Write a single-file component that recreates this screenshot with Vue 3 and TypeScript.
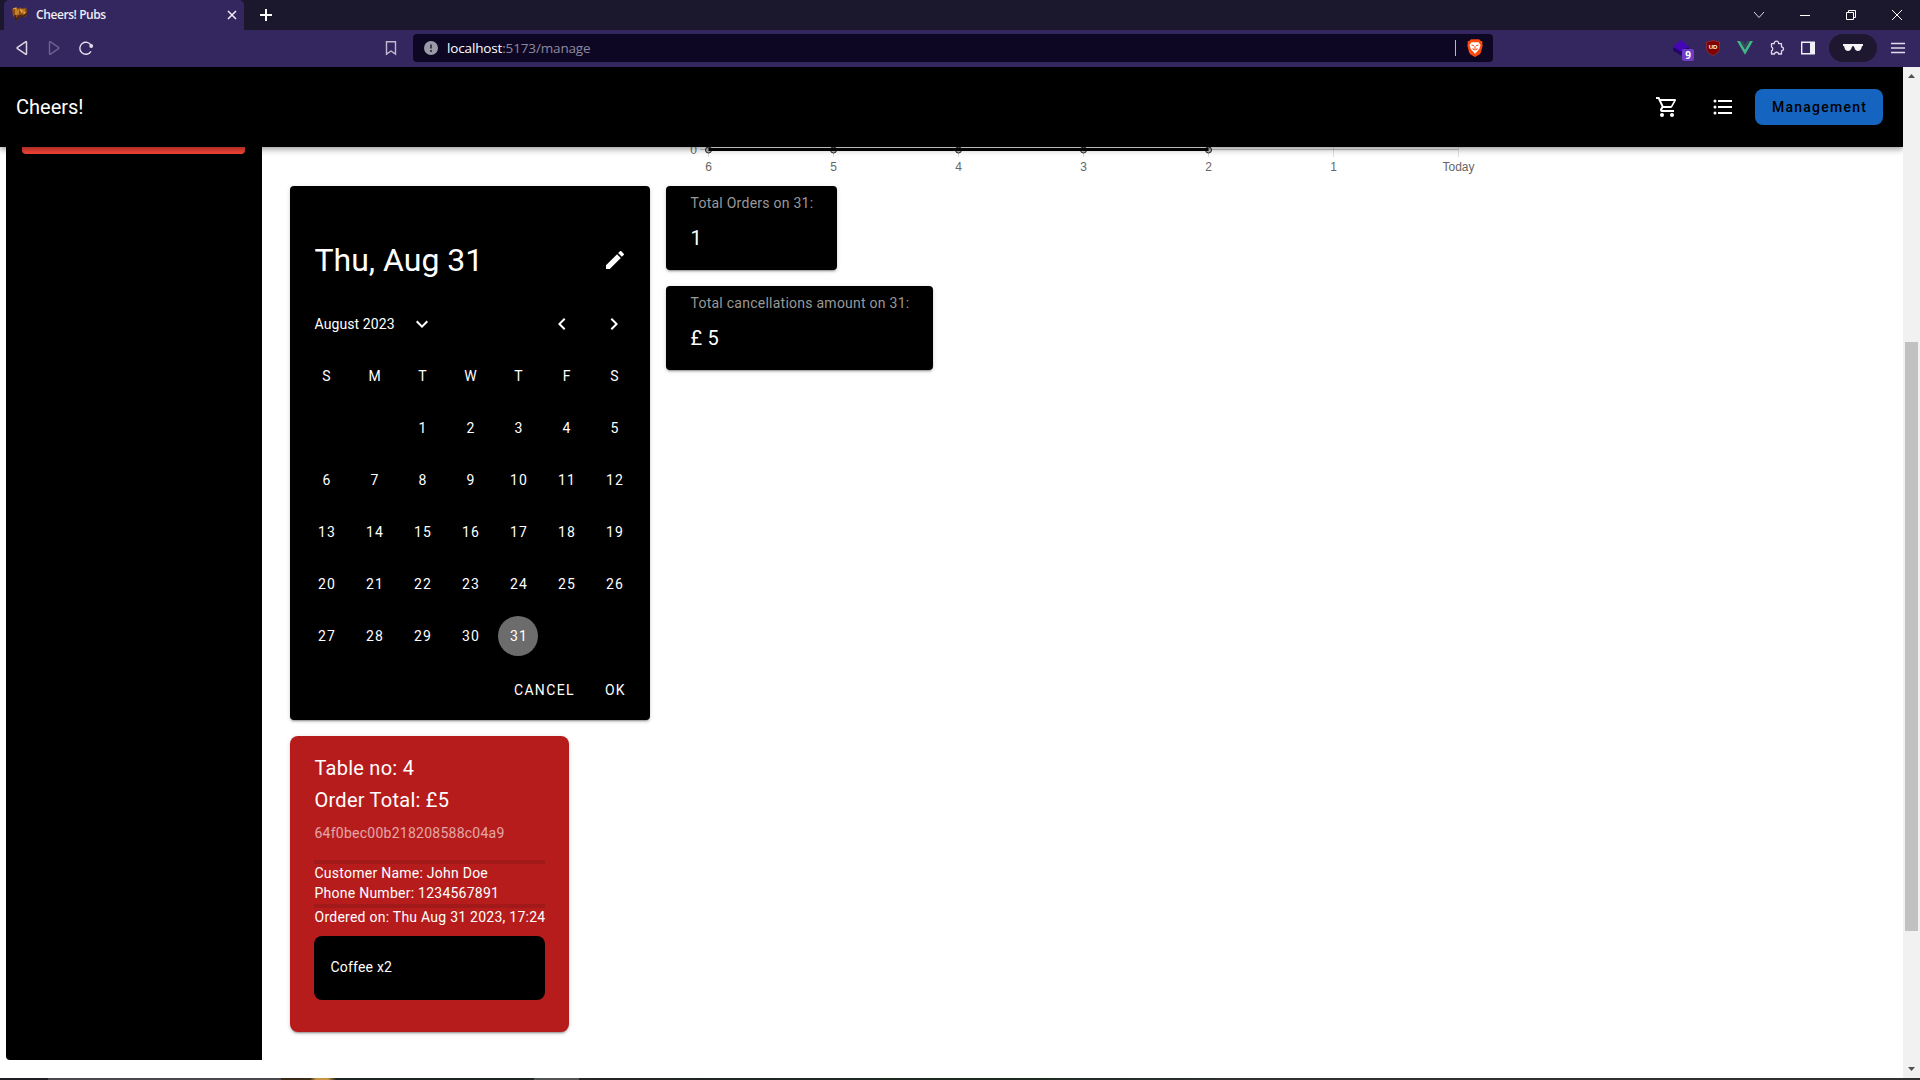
<script setup lang="ts">
interface Point { label: string; x: number; plotted: boolean }

const weekdays: string[] = ['S', 'M', 'T', 'W', 'T', 'F', 'S']
const firstWeekday = 2
const daysInMonth = 31
const selectedDay = 31
const days: (number | null)[] = [
  ...Array.from({ length: firstWeekday }, () => null),
  ...Array.from({ length: daysInMonth }, (_, i) => i + 1),
]

const labels = ['6', '5', '4', '3', '2', '1', 'Today']
const points: Point[] = labels.map((label, i) => ({ label, x: 28.5 + i * 125, plotted: i < 5 }))

const stats = [
  { title: 'Total Orders on 31:', value: '1' },
  { title: 'Total cancellations amount on 31:', value: '£ 5' },
]
</script>

<template>
  <div class="window">
    <div class="titlebar">
      <div class="tab">
        <svg class="favicon" width="18" height="18" viewBox="0 0 18 18">
          <path d="M1 3.500 4 1.500l2 1 3-1 2.500 1 3.500-1 1 3v4l-2 2.500-3-.5-3 1-3 3.500-1-4-2-1z" fill="#8a4d17" />
          <path d="M2 3l3-1v7M7 3.500v5M9 3l2 4V3M13 3.500v4l2-1" stroke="#e8a33a" stroke-width="1.200" fill="none" />
          <path d="M4 9l1 5 3-4h5l3-3" stroke="#45210c" stroke-width="1.300" fill="none" />
        </svg>
        <span class="tab-title">Cheers! Pubs</span>
        <svg class="tab-close" width="10" height="10" viewBox="0 0 10 10"><path d="M1 1l8 8M9 1L1 9" stroke="#f1eff8" stroke-width="1.500" /></svg>
      </div>
      <svg class="new-tab" width="12" height="12" viewBox="0 0 12 12"><path d="M6 0v12M0 6h12" stroke="#fff" stroke-width="2" /></svg>
      <div class="controls">
        <svg width="12" height="12" viewBox="0 0 12 12"><path d="M1 3l5 5.500L11 3" fill="none" stroke="#dcdbe0" /></svg>
        <svg width="12" height="12" viewBox="0 0 12 12"><path d="M1 6.500h10" stroke="#fff" /></svg>
        <svg width="12" height="12" viewBox="0 0 12 12"><path d="M1.500 3.500h7v7h-7zM3.500 3.500v-2h7v7h-2" fill="none" stroke="#fff" /></svg>
        <svg width="12" height="12" viewBox="0 0 12 12"><path d="M1 1l10 10M11 1L1 11" stroke="#fff" /></svg>
      </div>
    </div>

    <div class="toolbar">
      <svg class="back" width="14" height="16" viewBox="0 0 14 16"><path d="M11.500 2.200v11.600q0 1-1 .4L2.500 8.700q-.8-.7 0-1.300L10.500 1.800q1-.5 1 .4z" fill="none" stroke="#dad7e5" stroke-width="1.500" /></svg>
      <svg class="forward" width="14" height="16" viewBox="0 0 14 16"><path d="M2.500 2.200v11.600q0 1 1 .4L11.500 8.700q.8-.7 0-1.300L3.500 1.800q-1-.5-1 .4z" fill="none" stroke="#6c5f92" stroke-width="1.500" /></svg>
      <svg class="reload" width="16" height="16" viewBox="0 0 16 16"><path d="M13 11.300A6 6 0 1 1 13.200 5.600" fill="none" stroke="#e3e0ee" stroke-width="1.400" /><circle cx="13.200" cy="6" r="1.900" fill="#e3e0ee" /></svg>
      <svg class="bookmark" width="12" height="16" viewBox="0 0 12 16"><path d="M1.500 1.800h9v12.300L6 11l-4.500 3.100z" fill="none" stroke="#c0bacf" stroke-width="1.400" /></svg>
      <div class="address">
        <svg width="14" height="14" viewBox="0 0 14 14"><circle cx="7" cy="7" r="7" fill="#9a9ba7" /><path d="M7 3.500v4M7 9v2" stroke="#333249" stroke-width="1.800" /></svg>
        <span class="url"><b>localhost</b>:5173/manage</span>
        <span class="divider"></span>
        <svg class="brave" width="16" height="18" viewBox="0 0 16 18">
          <path d="M4 .3h8l1.500 1.500 2 .7-.3 2.500.5 1.500-1.900 7.200-1.300 1.800L8 18l-4.500-2.500-1.300-1.800L.3 6.500.8 5 .5 2.500l2-.7z" fill="#fb4a0c" />
          <path d="M4.500 3.300h7l2 2.700-1 3.200-1.300 2-3.200 3.500-3.200-3.500-1.300-2-1-3.200z" fill="#fff" />
          <path d="M4.500 6l2.500.8M11.500 6L9 6.800M8 7v3M5.500 9.500L7 10.800h2l1.500-1.300" stroke="#fb542b" stroke-width="1.100" fill="none" />
        </svg>
      </div>
      <div class="extensions">
        <div class="devtool">
          <svg width="18" height="18" viewBox="0 0 18 18"><path d="M1 8.500v3l8 5 8-5v-3z" fill="#25056c" /><path d="M9 1l8 6.500-8 5-8-5z" fill="#4506b5" /></svg>
          <span class="count">9</span>
        </div>
        <div class="shield">
          <svg width="14" height="16" viewBox="0 0 14 16"><path d="M7 .5L13.500 2v6q0 5-6.500 7.500Q.5 13 .5 8V2z" fill="#800000" stroke="#9e3430" stroke-width=".7" /></svg>
          <span>UD</span>
        </div>
        <svg width="16" height="14" viewBox="0 0 16 14"><path d="M0 0h3l5 8.500L13 0h3L8 13.800z" fill="#41b883" /><path d="M3 0h3l2 3.500L10 0h3L8 8.500z" fill="#34495e" /></svg>
        <svg width="16" height="16" viewBox="0 0 16 16"><path d="M2 3.700h2.800a2.200 2.200 0 1 1 4.300 0H12v3.200a2 2 0 1 1 0 4V14H9.200a2.200 2.200 0 0 0-4.300 0H2v-3.100a2.200 2.200 0 0 0 0-4z" transform="translate(.5)" fill="none" stroke="#dedbea" stroke-width="1.300" stroke-linejoin="round" /></svg>
        <svg width="14" height="14" viewBox="0 0 14 14"><path d="M.7 1.200h12.600v11.600H.7z" fill="none" stroke="#f1eff6" stroke-width="1.400" /><path d="M9 1h4v12H9z" fill="#f1eff6" /></svg>
        <div class="private">
          <svg width="20" height="8" viewBox="0 0 20 8"><path d="M0 0h20v1.700l-1 .5-1 3Q17.300 7 15 7t-3-1.700l-1.200-3H9.200L8 5.300Q7.300 7 5 7T2 5.200l-1-3-1-.5z" fill="#f4f3f6" /></svg>
        </div>
        <svg width="14" height="12" viewBox="0 0 14 12"><path d="M0 1.500h14M0 6h14M0 10.500h14" stroke="#dedbea" stroke-width="1.300" /></svg>
      </div>
    </div>

    <div class="viewport">
      <div class="page">
        <header class="appbar">
          <span class="brand">Cheers!</span>
          <div class="nav">
            <svg width="24" height="24" viewBox="0 0 24 24"><path fill="#fff" d="M17 18a2 2 0 0 1 2 2 2 2 0 0 1-2 2 2 2 0 0 1-2-2c0-1.110.89-2 2-2M1 2h3.270l.94 2H20a1 1 0 0 1 1 1c0 .17-.05.34-.12.5l-3.580 6.470c-.34.61-1 1.030-1.750 1.030H8.100l-.9 1.630-.03.12a.25.25 0 0 0 .25.25H19v2H7a2 2 0 0 1-2-2c0-.35.090-.68.240-.96l1.360-2.450L3 4H1V2m6 16a2 2 0 0 1 2 2 2 2 0 0 1-2 2 2 2 0 0 1-2-2c0-1.110.89-2 2-2m9-7 2.780-5H6.140l2.360 5H16z" /></svg>
            <svg width="24" height="24" viewBox="0 0 24 24"><path fill="#fff" d="M7 5h14v2H7V5m0 8v-2h14v2H7M4 4.500A1.500 1.500 0 0 1 5.500 6 1.500 1.500 0 0 1 4 7.500 1.500 1.500 0 0 1 2.500 6 1.500 1.500 0 0 1 4 4.500m0 6A1.500 1.500 0 0 1 5.500 12 1.500 1.500 0 0 1 4 13.500 1.500 1.500 0 0 1 2.500 12 1.500 1.500 0 0 1 4 10.500M7 19v-2h14v2H7m-3-2.500A1.500 1.500 0 0 1 5.500 18 1.500 1.500 0 0 1 4 19.500 1.500 1.500 0 0 1 2.500 18 1.500 1.500 0 0 1 4 16.500z" /></svg>
            <button class="manage">Management</button>
          </div>
        </header>

        <div class="body">
          <aside class="sidebar"><div class="logout"></div></aside>

          <main class="main">
            <svg class="chart" width="820" height="39" viewBox="0 0 820 39">
              <path d="M20 2.500H778" stroke="#000" stroke-opacity=".22" />
              <path v-for="p in points" :key="'t' + p.label" :d="`M${p.x} 0V10`" stroke="#000" stroke-opacity=".12" />
              <template v-for="p in points" :key="'p' + p.label">
                <circle v-if="p.plotted" :cx="p.x" cy="3" r="3" fill="#bbb" stroke="#222" />
              </template>
              <path d="M28.500 2.500H528.500" stroke="#000" stroke-width="3" />
              <text x="17" y="6.500" text-anchor="end">0</text>
              <text v-for="p in points" :key="p.label" :x="p.x" y="24" text-anchor="middle">{{ p.label }}</text>
            </svg>

            <div class="columns">
              <div class="left">
                <section class="calendar">
                  <div class="cal-head">
                    <span>Thu, Aug 31</span>
                    <svg width="24" height="24" viewBox="0 0 24 24"><path fill="#fff" d="M20.710 7.040c.39-.39.39-1.040 0-1.410l-2.340-2.340c-.37-.39-1.020-.39-1.410 0l-1.840 1.830 3.750 3.750M3 17.250V21h3.750L17.810 9.930l-3.750-3.750L3 17.250z" /></svg>
                  </div>
                  <div class="cal-nav">
                    <span class="month">August 2023</span>
                    <svg class="drop" width="24" height="24" viewBox="0 0 24 24"><path fill="#fff" d="M7.410 8.580 12 13.170l4.590-4.590L18 10l-6 6-6-6 1.410-1.420z" /></svg>
                    <svg class="prev" width="24" height="24" viewBox="0 0 24 24"><path fill="#fff" d="M15.410 16.580 10.830 12l4.580-4.590L14 6l-6 6 6 6 1.410-1.420z" /></svg>
                    <svg class="next" width="24" height="24" viewBox="0 0 24 24"><path fill="#fff" d="M8.590 16.580 13.170 12 8.590 7.410 10 6l6 6-6 6-1.410-1.420z" /></svg>
                  </div>
                  <div class="grid">
                    <span v-for="(w, i) in weekdays" :key="'w' + i" class="cell weekday">{{ w }}</span>
                    <span v-for="(d, i) in days" :key="i" class="cell">
                      <span v-if="d" :class="['day', { selected: d === selectedDay }]">{{ d }}</span>
                    </span>
                  </div>
                  <div class="actions"><span>CANCEL</span><span>OK</span></div>
                </section>

                <section class="order">
                  <div class="order-title">Table no: 4</div>
                  <div class="order-title">Order Total: £5</div>
                  <div class="order-id">64f0bec00b218208588c04a9</div>
                  <div class="rule first"></div>
                  <div class="line">Customer Name: John Doe</div>
                  <div class="line">Phone Number: 1234567891</div>
                  <div class="rule"></div>
                  <div class="line date">Ordered on: Thu Aug 31 2023, 17:24</div>
                  <div class="item">Coffee x2</div>
                </section>
              </div>

              <div class="right">
                <section v-for="s in stats" :key="s.title" class="stat">
                  <div class="stat-title">{{ s.title }}</div>
                  <div class="stat-value">{{ s.value }}</div>
                </section>
              </div>
            </div>
          </main>
        </div>
      </div>

      <div class="scrollbar">
        <svg width="7" height="4" viewBox="0 0 7 4"><path d="M3.500 0L7 4H0z" fill="#505050" /></svg>
        <div class="thumb"></div>
        <svg class="down" width="7" height="4" viewBox="0 0 7 4"><path d="M3.500 4L7 0H0z" fill="#505050" /></svg>
      </div>
    </div>

    <div class="taskbar"></div>
  </div>
</template>

<style>
html, body { margin: 0; overflow: hidden; background: #fff; }
</style>

<style scoped>
* { box-sizing: border-box; }
svg { display: block; flex: none; }
.window { width: 1920px; height: 1080px; display: flex; flex-direction: column; overflow: hidden; font-family: Roboto, "Liberation Sans", sans-serif; color: #fff; }

.titlebar { height: 30px; flex: none; background: #1b182e; display: flex; align-items: center; padding-left: 4px; }
.tab { width: 240px; height: 30px; background: #34275f; border-radius: 5px 5px 0 0; display: flex; align-items: center; padding: 0 7px; }
.favicon { margin-top: -1px; }
.tab-title { margin-left: 7px; font: 600 12px "Open Sans", "Noto Sans", sans-serif; letter-spacing: -.42px; color: #eeecf4; flex: 1; padding-bottom: 2px; }
.new-tab { margin-left: 16px; }
.controls { margin-left: auto; display: flex; gap: 34px; padding-right: 17px; padding-bottom: 1px; }

.toolbar { height: 37px; flex: none; background: #34275f; display: flex; align-items: center; padding-bottom: 1px; }
.back { margin-left: 15px; }
.forward { margin-left: 18px; }
.reload { margin-left: 17px; }
.bookmark { margin-left: 291px; }
.address { margin-left: 16px; width: 1080px; height: 28px; background: #0e0724; border-radius: 4px; display: flex; align-items: center; padding: 0 10px 0 11px; }
.url { font: 400 13.500px "Open Sans", "Noto Sans", sans-serif; margin-left: 9px; letter-spacing: -.15px; color: #8d899c; padding-bottom: 1px; }
.url b { font-weight: 400; color: #fff; }
.divider { width: 1px; height: 16px; background: #bbb8c5; margin-left: auto; }
.brave { margin-left: 11px; }
.extensions { margin-left: auto; display: flex; align-items: center; padding-right: 15px; }
.devtool { position: relative; margin-right: 16px; }
.count { position: absolute; left: 10px; top: 10px; width: 12px; height: 12px; border-radius: 2px; background: #6e3cc4; font: 700 10px/12px "Open Sans", sans-serif; text-align: center; }
.shield { position: relative; margin-right: 17px; }
.shield span { position: absolute; inset: 0; text-align: center; font: 700 6px/15px "Liberation Sans", sans-serif; }
.extensions > svg { margin-right: 16px; }
.extensions > svg:last-child { margin-right: 0; }
.private { width: 48px; height: 28px; border-radius: 14px; background: #1d1730; display: flex; align-items: center; justify-content: center; margin: 0 14px 0 -2px; }

.viewport { height: 1011px; flex: none; display: flex; background: #fff; }
.page { width: 1903px; display: flex; flex-direction: column; overflow: hidden; }
.appbar { height: 80px; flex: none; background: #000; display: flex; align-items: center; justify-content: space-between; padding: 0 20px 0 16px; position: relative; z-index: 1; box-shadow: 0 2px 4px -1px rgba(0,0,0,.2), 0 4px 5px 0 rgba(0,0,0,.14), 0 1px 10px 0 rgba(0,0,0,.12); }
.brand { font-size: 20px; letter-spacing: 0; }
.nav { display: flex; align-items: center; }
.nav svg { margin-right: 32px; }
.nav svg:nth-child(2) { margin-right: 20px; }
.manage { width: 128px; height: 36px; border: 0; padding: 0 0 0 1px; border-radius: 8px; background: #1565c0; color: #000; font: 500 14px Roboto, sans-serif; letter-spacing: 1.250px; }

.body { flex: 1; display: flex; }
.sidebar { width: 256px; height: 913px; margin-left: 6px; background: #000; border-radius: 0 0 0 4px; padding: 0 17px 0 16px; }
.logout { height: 7px; background: #f44336; border-radius: 0 0 4px 4px; }
.main { margin-left: 28px; }
.chart { margin-left: 390px; overflow: visible; font: 12px "Liberation Sans", Arial, sans-serif; fill: #666; }
.columns { display: flex; gap: 16px; align-items: flex-start; }
.left, .right { display: flex; flex-direction: column; align-items: flex-start; gap: 16px; }
.calendar, .order, .stat { box-shadow: 0 3px 1px -2px rgba(0,0,0,.2), 0 2px 2px 0 rgba(0,0,0,.14), 0 1px 5px 0 rgba(0,0,0,.12); }
.calendar { width: 360px; height: 534px; border-radius: 4px; background: #000; display: flex; flex-direction: column; }
.cal-head { height: 70px; margin-top: 39px; padding: 0 23px 0 24.500px; display: flex; align-items: center; justify-content: space-between; font-size: 32px; }
.cal-nav { height: 56px; padding: 2px 24px 0 24.500px; display: flex; align-items: center; font-size: 14px; }
.month { letter-spacing: .1px; }
.drop { margin-left: 15px; }
.prev { margin-left: auto; }
.next { margin-left: 28px; }
.grid { display: grid; grid-template-columns: repeat(7, 48px); grid-auto-rows: 52px; margin: -1px 12px 0; }
.cell { display: flex; align-items: center; justify-content: center; font-size: 14px; }
.weekday { padding-left: 1px; }
.day { width: 40px; height: 40px; border-radius: 50%; display: flex; align-items: center; justify-content: center; letter-spacing: 1.250px; padding-left: 2px; }
.selected { background: #6c6c6c; }
.actions { height: 52px; margin-top: 2px; display: flex; align-items: center; justify-content: flex-end; gap: 30px; padding-right: 24px; font-size: 14px; letter-spacing: 1.350px; }

.order { width: 279px; height: 296px; background: #b71c1c; border-radius: 8px; padding: 16px 24px; }
.order-title { font-size: 20px; line-height: 32px; letter-spacing: .25px; padding-left: .5px; }
.order-id { font-size: 14px; line-height: 20px; margin-top: 7px; letter-spacing: .25px; opacity: .6; padding-left: .5px; }
.rule { height: 4px; background: #a11919; }
.rule.first { margin-top: 17px; }
.line { font-size: 14px; line-height: 20px; height: 20px; letter-spacing: .25px; white-space: nowrap; position: relative; top: -1px; padding-left: .5px; }
.item { margin-top: 8px; height: 64px; background: #000; border-radius: 8px; padding: 0 16.500px; font-size: 14px; line-height: 62px; letter-spacing: .2px; }

.stat { height: 84px; background: #000; border-radius: 4px; padding: 7px 23.500px 0 24.500px; }
.stat-title { font-size: 14px; line-height: 20px; letter-spacing: .25px; color: #999; white-space: nowrap; }
.stat-value { font-size: 20px; line-height: 32px; letter-spacing: .25px; margin-top: 9px; }

.scrollbar { width: 17px; background: #f1f1f1; display: flex; flex-direction: column; align-items: center; padding: 7px 0; }
.thumb { width: 13px; height: 589px; margin-top: 264px; background: #c1c1c1; }
.down { margin-top: auto; }
.taskbar { height: 2px; flex: none; background: linear-gradient(to right, #1f1f23 0 48px, #4a4a4e 48px 281px, #3a2a18 281px 310px, #c89545 316px 328px, #1d2622 336px 534px, #525553 534px 579px, #232425 579px, #1b2a20 1000px, #303133 1250px); }
</style>
